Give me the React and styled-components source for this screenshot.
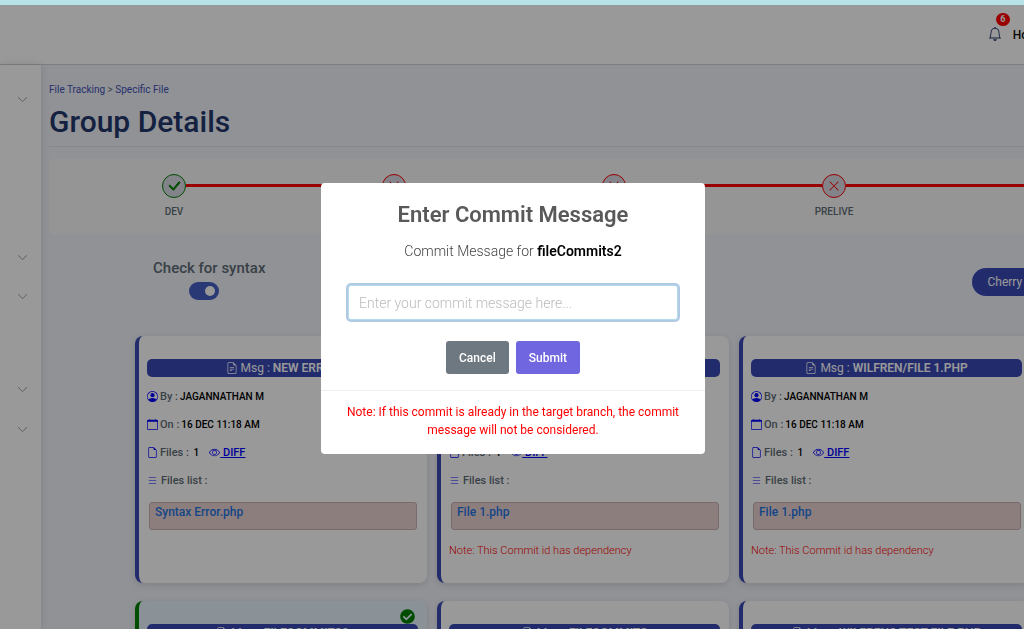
import { useState } from "react"
import styled, { createGlobalStyle } from "styled-components"
import {
    BsBell,
    BsCalendar,
    BsCheckLg,
    BsEye,
    BsFileEarmark,
    BsFileEarmarkText,
    BsList,
    BsPersonCircle,
    BsXLg,
} from "react-icons/bs"
import { FaCheckCircle } from "react-icons/fa"
import { SlArrowDown } from "react-icons/sl"

const GlobalStyle = createGlobalStyle`
    * {
        box-sizing: border-box;
    }

    body {
        margin: 0;
        overflow: hidden;
        background-color: #f0f3fa;
        color: #606c76;
        font-family: Roboto, "Liberation Sans", sans-serif;
        font-size: 12px;
    }

    button,
    input {
        font-family: inherit;
    }
`

const stages = [
    { name: "DEV", done: true },
    { name: "TEST", done: false },
    { name: "STAGING", done: false },
    { name: "PRELIVE", done: false },
    { name: "LIVE", done: false },
]

const commits = [
    { id: 1, msg: "NEW ERROR", file: "Syntax Error.php" },
    { id: 2, msg: "WILFREN/FILE 1", file: "File 1.php", dependency: true },
    { id: 3, msg: "WILFREN/FILE 1.PHP", file: "File 1.php", dependency: true },
    { id: 4, msg: "FILECOMMITS2", file: "File 2.php", selected: true },
    { id: 5, msg: "FILECOMMITS", file: "File 2.php" },
    { id: 6, msg: "WILFRENS TEST FILE.PHP", file: "Test File.php" },
]

const Page = styled.div`
    min-width: 1080px;
    height: 100vh;
    overflow: hidden;
    display: flex;
    flex-direction: column;
`

const TopStrip = styled.div`
    height: 5px;
    flex: none;
    background-color: #b8e3e6;
`

const Header = styled.header`
    height: 60px;
    flex: none;
    display: flex;
    align-items: center;
    justify-content: flex-end;
    gap: 11px;
    padding-right: 35px;
    background-color: #fff;
    border-bottom: solid 1px #cfd2d6;
    color: #111;
`

const BellButton = styled.button`
    position: relative;
    display: flex;
    padding: 0 0 2px;
    border: none;
    background: none;
    color: #1f3369;
    font-size: 14px;
`

const Badge = styled.span`
    position: absolute;
    top: -14px;
    left: 8px;
    width: 14px;
    border-radius: 7px;
    background-color: #f00;
    color: #fff;
    font-size: 9px;
    font-weight: 700;
    line-height: 13px;
    text-align: center;
`

const HeaderLink = styled.a`
    color: inherit;
    font-weight: 500;
    text-decoration: none;
`

const Body = styled.div`
    flex: 1;
    display: flex;
    min-height: 0;
`

const Sidebar = styled.nav`
    width: 41px;
    flex: none;
    display: flex;
    flex-direction: column;
    align-items: flex-end;
    padding: 30px 14px 0 0;
    background-color: #fff;
    box-shadow: 0 0 8px #0000001f;
`

const NavToggle = styled.button`
    display: flex;
    padding: 0;
    border: none;
    background: none;
    color: #888;
    font-size: 9px;
    margin-bottom: ${(props) => props.$space}px;
`

const Main = styled.main`
    flex: 1;
    min-width: 0;
    padding: 18px 0 0 8px;
`

const Breadcrumb = styled.div`
    font-size: 10px;
    line-height: 14px;

    & a {
        color: #3f51b5;
        text-decoration: none;
    }
`

const PageTitle = styled.h1`
    margin: 7px 0 0;
    padding-bottom: 6px;
    border-bottom: solid 1px #dfe2ea;
    color: #24376c;
    font-size: 30px;
    font-weight: 500;
    line-height: 36px;
`

const Stepper = styled.ol`
    display: flex;
    margin: 12px 0 0;
    padding: 15px;
    height: 75px;
    border-radius: 6px;
    background-color: #f9f9f8;
    list-style: none;
`

const Step = styled.li`
    position: relative;
    flex: 1 0 220px;
    display: flex;
    flex-direction: column;
    align-items: center;
    gap: 7px;
    font-size: 10px;
    font-weight: 500;
    line-height: 14px;

    &:not(:last-child)::after {
        content: "";
        position: absolute;
        top: 10px;
        left: calc(50% + 12px);
        width: calc(100% - 24px);
        height: 3px;
        background-color: #f00;
    }
`

const StepMark = styled.span`
    display: flex;
    align-items: center;
    justify-content: center;
    width: 24px;
    height: 24px;
    border: solid 1px;
    border-radius: 50%;
    background-color: #d9dce6;
    color: ${(props) => (props.$done ? "green" : "#f00")};
    font-size: ${(props) => (props.$done ? 16 : 12)}px;

    & svg {
        stroke-width: ${(props) => (props.$done ? 0.8 : 0)};
    }
`

const Toolbar = styled.div`
    display: flex;
    justify-content: space-between;
    align-items: center;
    padding: 24px 17px 0 104px;
`

const SyntaxLabel = styled.label`
    display: flex;
    flex-direction: column;
    gap: 4px;
    font-size: 15px;
    font-weight: 500;
    line-height: 20px;
`

const Switch = styled.input`
    appearance: none;
    width: 30px;
    height: 18px;
    margin: 0 0 0 36px;
    padding: 4px;
    border-radius: 9px;
    background-color: ${(props) => (props.checked ? "#4460c4" : "#b5b9c4")};

    &::before {
        content: "";
        display: block;
        width: 10px;
        height: 10px;
        margin-left: ${(props) => (props.checked ? 12 : 0)}px;
        border-radius: 50%;
        background-color: #fff;
    }
`

const CherryPick = styled.button`
    height: 28px;
    margin-top: 6px;
    padding: 0 15px;
    border: none;
    border-radius: 14px;
    background-color: #3a4ab6;
    color: #fff;
    font-size: 12px;
`

const CardGrid = styled.section`
    display: grid;
    grid-template-columns: repeat(3, 1fr);
    gap: 18px 10px;
    padding: 36px 49px 0 86px;
`

const Card = styled.article`
    position: relative;
    height: 247px;
    padding: 23px 9px 0 8px;
    border-left: solid 4px ${(props) => (props.$selected ? "green" : "#3a4ab6")};
    border-radius: 8px;
    background-color: ${(props) => (props.$selected ? "#e6f3fd" : "#fff")};
    box-shadow: 0 2px 6px #0000001f;
`

const SelectedMark = styled(FaCheckCircle)`
    position: absolute;
    top: 8px;
    right: 12px;
    color: green;
    font-size: 15px;
`

const CardTitle = styled.h2`
    display: flex;
    align-items: center;
    justify-content: center;
    gap: 3px;
    height: 18px;
    margin: 0 0 10px;
    border-radius: 5px;
    background-color: #3a4ab6;
    color: #fff;
    font-size: 12px;
    font-weight: 400;
    white-space: nowrap;

    & b {
        font-weight: 600;
    }
`

const CardRow = styled.div`
    display: flex;
    align-items: center;
    gap: ${(props) => props.$gap || 2}px;
    height: 18px;
    margin-bottom: 10px;
    font-size: 11px;
    font-weight: 500;

    & svg {
        color: #00f;
        font-size: 11px;
    }

    & strong {
        color: #000;
        font-size: 10px;
        font-weight: 500;
    }
`

const DiffLink = styled.a`
    display: flex;
    align-items: center;
    margin-left: 8px;
    color: #00f;
`

const FileBox = styled.div`
    height: 28px;
    margin: 13px 1px 0 2px;
    padding: 2px 5px;
    border: solid 1px #c9b3b5;
    border-radius: 3px;
    background-color: #ebd2d3;

    & a {
        color: #1f75e0;
        font-size: 12px;
        font-weight: 500;
        text-decoration: none;
    }
`

const DependencyNote = styled.p`
    margin: 13px 0 0;
    color: #f00;
    font-size: 11px;
    font-weight: 300;
    line-height: 16px;
`

const Backdrop = styled.div`
    position: fixed;
    inset: 5px 0 0;
    display: flex;
    align-items: center;
    justify-content: center;
    padding: 3px 0 0 2px;
    background-color: #00000066;
`

const Modal = styled.form`
    width: 384px;
    max-width: 100%;
    border-radius: 4px;
    background-color: #fff;
    text-align: center;
`

const ModalTitle = styled.h2`
    margin: 0;
    padding-top: 17px;
    color: #595959;
    font-size: 22px;
    font-weight: 600;
    line-height: 30px;
`

const ModalText = styled.label`
    display: block;
    margin-top: 11px;
    color: #444;
    font-size: 14px;
    font-weight: 300;
    line-height: 20px;

    & b {
        color: #000;
        font-weight: 600;
    }
`

const MessageInput = styled.input`
    display: block;
    width: calc(100% - 54px);
    height: 35px;
    margin: 24px auto 0;
    padding: 0 10px;
    border: solid 1px #b4dbed;
    border-radius: 3px;
    outline: none;
    box-shadow: 0 0 0 2px #6496c880;
    color: #545454;
    font-size: 14px;
    font-weight: 300;

    &::placeholder {
        color: #bbb;
    }
`

const Actions = styled.div`
    display: flex;
    justify-content: center;
    gap: 7px;
    padding: 21px 0 16px;
`

const ActionButton = styled.button`
    height: 33px;
    padding: 0 13px;
    border: none;
    border-radius: 3px;
    background-color: ${(props) => (props.$primary ? "#7066e0" : "#6e7881")};
    color: #fff;
    font-size: 12px;
    font-weight: 500;
`

const ModalFooter = styled.p`
    margin: 0;
    padding: 12px 24px 15px;
    border-top: solid 1px #eee;
    color: #f00;
    font-size: 12px;
    line-height: 18px;
`

const CommitCard = ({ commit }) => (
    <Card $selected={commit.selected}>
        {commit.selected && <SelectedMark />}
        <CardTitle>
            <BsFileEarmarkText />
            <span>
                Msg : <b>{commit.msg}</b>
            </span>
        </CardTitle>
        <CardRow>
            <BsPersonCircle />
            <span>By :</span>
            <strong>JAGANNATHAN M</strong>
        </CardRow>
        <CardRow>
            <BsCalendar />
            <span>On :</span>
            <strong>16 DEC 11:18 AM</strong>
        </CardRow>
        <CardRow>
            <BsFileEarmark />
            <span>Files :&nbsp;</span>
            <strong>1</strong>
            <DiffLink href="#diff">
                <BsEye />
                &nbsp;DIFF
            </DiffLink>
        </CardRow>
        <CardRow $gap={3}>
            <BsList />
            <span>Files list :</span>
        </CardRow>
        <FileBox>
            <a href="#file">{commit.file}</a>
        </FileBox>
        {commit.dependency && (
            <DependencyNote>Note: This Commit id has dependency</DependencyNote>
        )}
    </Card>
)

const CommitModal = ({ onClose }) => {
    const [message, setMessage] = useState("")

    const onSubmit = (e) => {
        e.preventDefault()
        onClose()
    }

    return (
        <Backdrop>
            <Modal role="dialog" aria-labelledby="modal-title" onSubmit={onSubmit}>
                <ModalTitle id="modal-title">Enter Commit Message</ModalTitle>
                <ModalText htmlFor="message">
                    Commit Message for <b>fileCommits2</b>
                </ModalText>
                <MessageInput
                    autoFocus
                    type="text"
                    id="message"
                    value={message}
                    placeholder="Enter your commit message here..."
                    onChange={(e) => setMessage(e.target.value)}
                />
                <Actions>
                    <ActionButton type="button" onClick={onClose}>
                        Cancel
                    </ActionButton>
                    <ActionButton $primary type="submit">
                        Submit
                    </ActionButton>
                </Actions>
                <ModalFooter>
                    Note: If this commit is already in the target branch, the
                    commit message will not be considered.
                </ModalFooter>
            </Modal>
        </Backdrop>
    )
}

const App = () => {
    const [checkSyntax, setCheckSyntax] = useState(true)
    const [modalOpen, setModalOpen] = useState(true)

    return (
        <>
            <GlobalStyle />
            <Page>
                <TopStrip />
                <Header>
                    <BellButton aria-label="Notifications">
                        <BsBell />
                        <Badge>6</Badge>
                    </BellButton>
                    <HeaderLink href="#home">Home</HeaderLink>
                </Header>
                <Body>
                    <Sidebar>
                        {[149, 30, 84, 31, 0].map((space, i) => (
                            <NavToggle
                                key={i}
                                $space={space}
                                aria-label="Expand menu"
                            >
                                <SlArrowDown />
                            </NavToggle>
                        ))}
                    </Sidebar>
                    <Main>
                        <Breadcrumb>
                            <a href="#tracking">File Tracking</a> &gt;{" "}
                            <a href="#file">Specific File</a>
                        </Breadcrumb>
                        <PageTitle>Group Details</PageTitle>
                        <Stepper>
                            {stages.map((stage) => (
                                <Step key={stage.name}>
                                    <StepMark $done={stage.done}>
                                        {stage.done ? <BsCheckLg /> : <BsXLg />}
                                    </StepMark>
                                    {stage.name}
                                </Step>
                            ))}
                        </Stepper>
                        <Toolbar>
                            <SyntaxLabel>
                                Check for syntax
                                <Switch
                                    type="checkbox"
                                    checked={checkSyntax}
                                    onChange={(e) =>
                                        setCheckSyntax(e.target.checked)
                                    }
                                />
                            </SyntaxLabel>
                            <CherryPick onClick={() => setModalOpen(true)}>
                                Cherry Pick
                            </CherryPick>
                        </Toolbar>
                        <CardGrid>
                            {commits.map((commit) => (
                                <CommitCard key={commit.id} commit={commit} />
                            ))}
                        </CardGrid>
                    </Main>
                </Body>
            </Page>
            {modalOpen && <CommitModal onClose={() => setModalOpen(false)} />}
        </>
    )
}

export default App
